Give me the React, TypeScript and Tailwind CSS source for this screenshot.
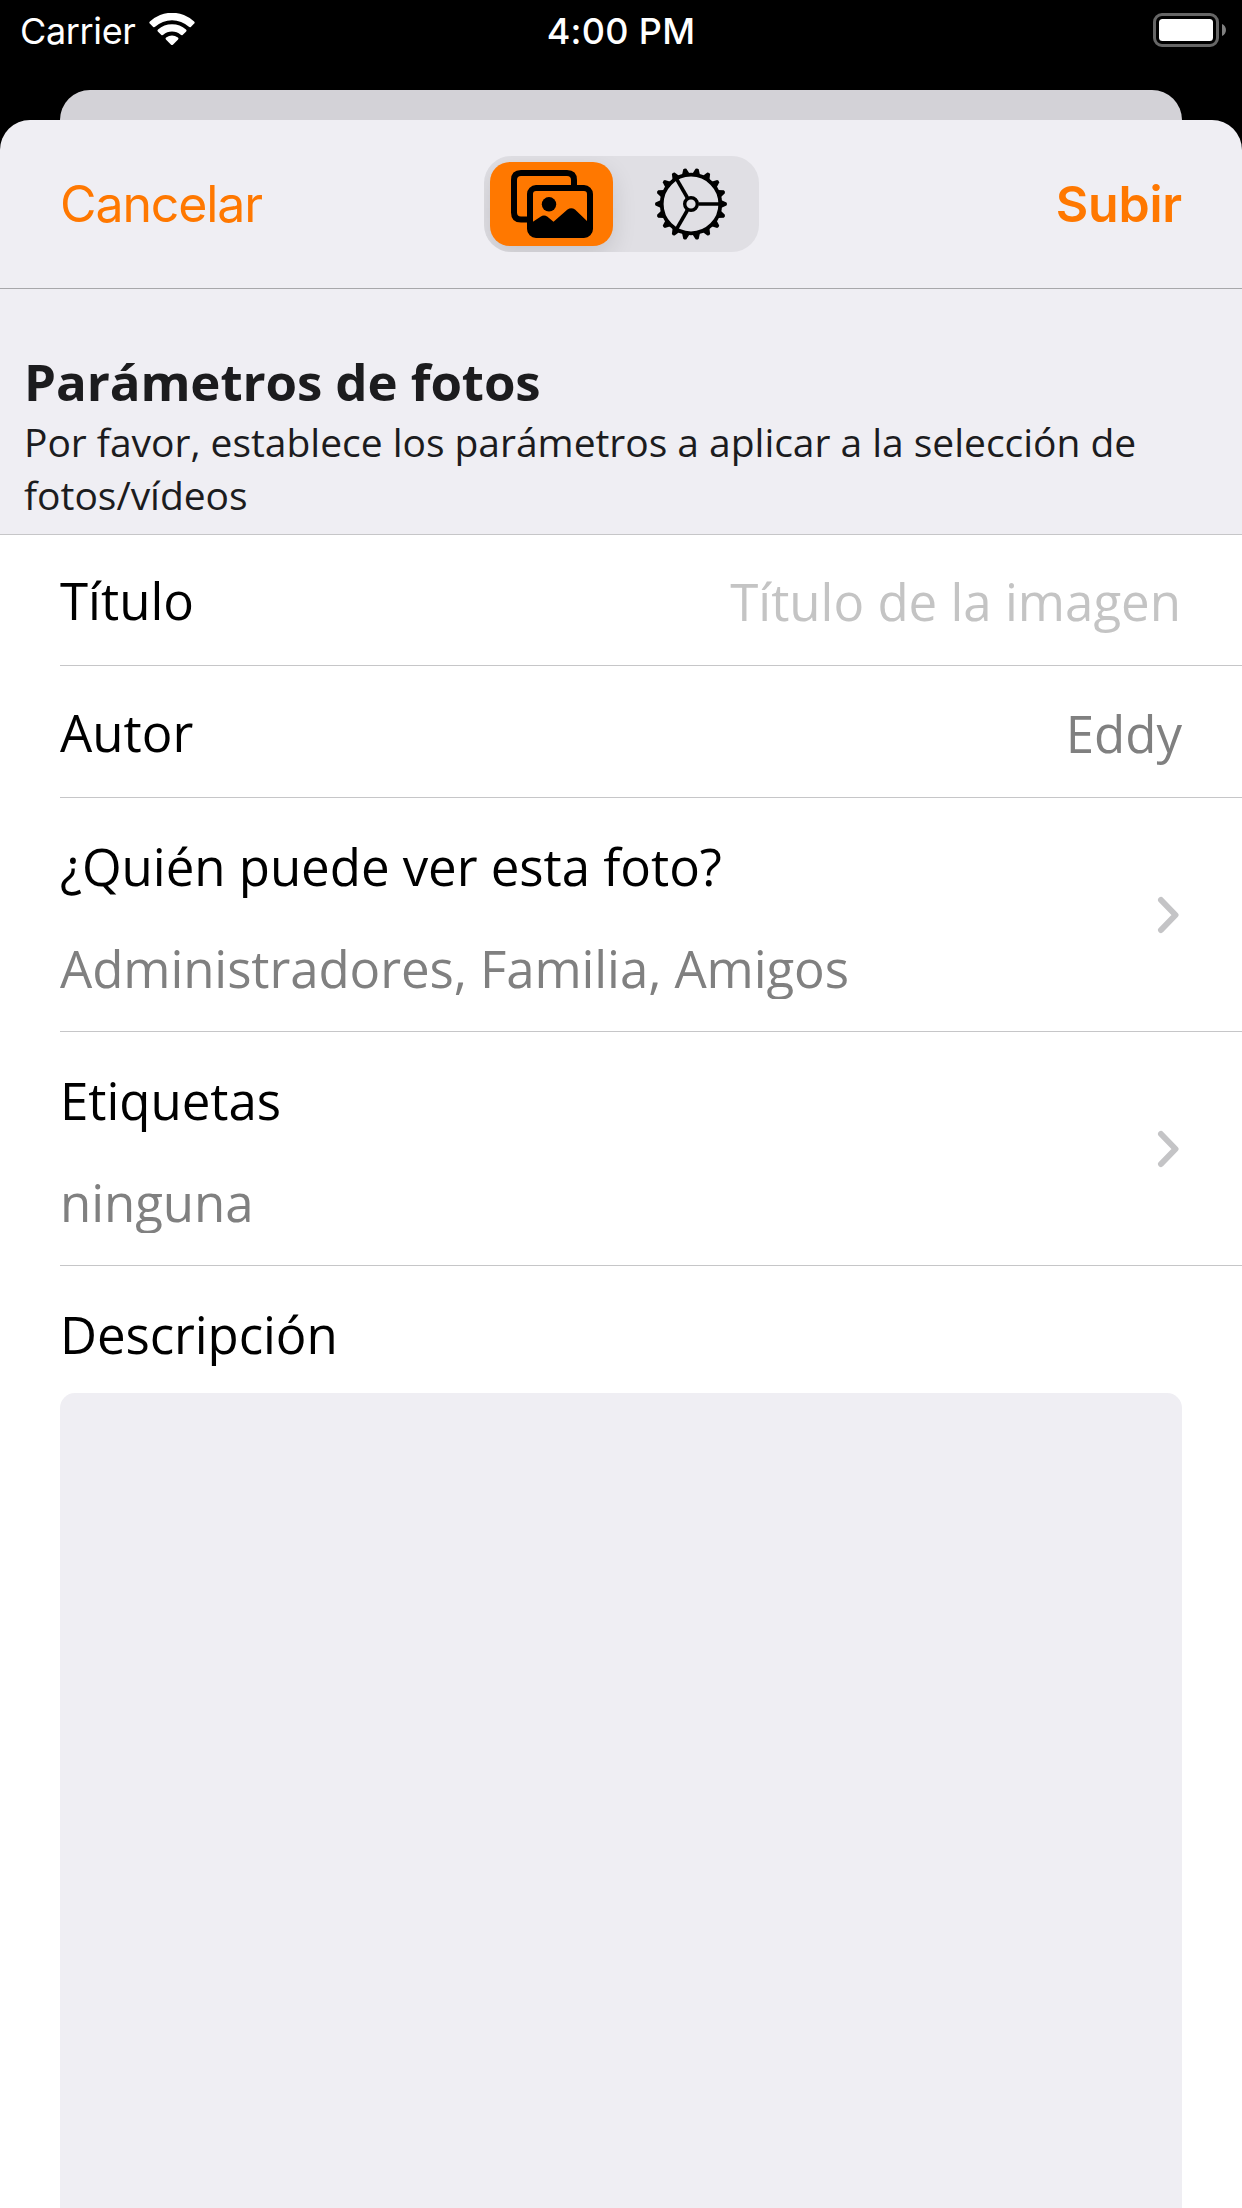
import React from "react";

const SANS = "font-['Open_Sans','Noto_Sans',sans-serif]";

function Wifi() {
  return (
    <svg width="46" height="34" viewBox="0 0 46 34" fill="#fff">
      <path d="M.8 10.6Q-.2 9.6.9 8.6A32 32 0 0 1 45.1 8.6Q46.2 9.6 45.2 10.6L41.8 13.9Q40.9 14.7 39.9 13.8A25 25 0 0 0 6.1 13.8Q5.1 14.7 4.2 13.9Z" />
      <path d="M8.8 18.4Q7.9 17.4 9 16.5A21 21 0 0 1 37 16.5Q38.1 17.4 37.2 18.4L33.6 21.9Q32.7 22.6 31.7 21.8A13.5 13.5 0 0 0 14.3 21.8Q13.3 22.6 12.4 21.9Z" />
      <path d="M16.9 26.4Q16 25.4 17.1 24.6A10 10 0 0 1 28.9 24.6Q30 25.4 29.1 26.4L23.9 31.7Q23 32.5 22.1 31.7Z" />
    </svg>
  );
}

function Battery() {
  return (
    <svg width="74" height="34" viewBox="0 0 74 34">
      <rect x="1.5" y="1.5" width="63" height="31" rx="7.5" fill="none" stroke="#666" strokeWidth="3" />
      <rect x="6" y="6" width="54" height="22" rx="3.5" fill="#fff" />
      <path d="M69 11C74.3 13 74.3 21 69 23Z" fill="#808080" />
    </svg>
  );
}

function Photos() {
  return (
    <svg width="82" height="68" viewBox="0 0 82 68">
      <path d="M63 18V10Q63 3 56 3H10Q3 3 3 10V42.500Q3 49.500 10 49.500H19" fill="none" stroke="#000" strokeWidth="6" />
      <rect x="19" y="18" width="60" height="47" rx="6" fill="none" stroke="#000" strokeWidth="6" />
      <circle cx="38" cy="34.300" r="7.2" />
      <path d="M20 53L29.500 46.700Q33 44.200 36.500 46.700L42.500 51.700L56.500 39.600Q60.200 37 64 39.600L77 52V62Q77 65 73 65H23Q19 65 19 62Z" />
    </svg>
  );
}

const TEETH = Array.from({ length: 18 }, (_, i) => i * 20);

function Gear() {
  return (
    <svg width="74" height="74" viewBox="-37 -37 74 74" stroke="#000">
      <circle r="29.300" fill="none" strokeWidth="3.800" />
      <circle r="6.300" fill="none" strokeWidth="3.400" />
      {[0, 120, 240].map((a) => (
        <path key={a} d="M7.500 0H29" strokeWidth="3.600" transform={`rotate(${a})`} />
      ))}
      {TEETH.map((a) => (
        <path key={a} d="M30 -3.900L35.500 -1.600Q36.600 0 35.500 1.600L30 3.900Z" stroke="none" transform={`rotate(${a})`} />
      ))}
    </svg>
  );
}

function Chevron() {
  return (
    <svg width="23" height="38" viewBox="0 0 23 38" className="mt-px mr-0.5 shrink-0">
      <path d="M4 4L18.500 19L4 34" fill="none" stroke="#c4c4c6" strokeWidth="6" strokeLinecap="round" strokeLinejoin="round" />
    </svg>
  );
}

function FieldRow({ label, value, tone }: { label: string; value: string; tone: string }) {
  return (
    <div className="ml-15 flex items-center justify-between border-b border-[#c6c6c8] pt-[3px] pr-15">
      <span className="pb-0.5">{label}</span>
      <span className={tone}>{value}</span>
    </div>
  );
}

function LinkRow({ label, value }: { label: string; value: string }) {
  return (
    <div className="ml-15 flex h-[234px] items-center justify-between border-b border-[#c6c6c8] pr-15">
      <div className="flex flex-col gap-8 self-start pt-[33px]">
        <span className="leading-[70px] tracking-[-0.04px]">{label}</span>
        <span className="h-[66px] overflow-hidden leading-[70px] text-[#808080]">{value}</span>
      </div>
      <Chevron />
    </div>
  );
}

export default function App() {
  return (
    <div className="flex h-[2208px] w-[1242px] flex-col overflow-hidden bg-black">
      <header className="grid h-[90px] shrink-0 grid-cols-3 items-start font-['Inter',sans-serif] text-white">
        <div className="flex items-start pt-[13px] pl-5">
          <span className="-mt-px w-[129px] text-[36px] leading-[38px] tracking-[-0.35px]">Carrier</span>
          <Wifi />
        </div>
        <div className="pt-3 text-center text-[36px] leading-[38px] font-medium tracking-[0.3px]">4:00 PM</div>
        <div className="flex justify-end pt-[13px] pr-[15px]">
          <Battery />
        </div>
      </header>
      <div className="mx-15 h-[30px] shrink-0 rounded-t-[30px] bg-[#d3d2d7]" />
      <main className="flex flex-1 flex-col rounded-t-[30px] bg-[#efeef3]">
        <nav className="grid h-[169px] shrink-0 grid-cols-[424px_275px_1fr] items-center border-b border-[#a7a7aa] px-15 font-['Inter',sans-serif] text-[50px] text-[#ff7800]">
          <span className="tracking-[-1.1px]">Cancelar</span>
          <div className="flex h-24 items-center overflow-hidden rounded-[27px] bg-[#e0dfe4] p-1.5">
            <div className="flex h-[84px] w-[123px] items-center justify-center rounded-[20px] bg-[#ff7800] pl-px shadow-[0_9px_24px_rgba(0,0,0,0.12)]">
              <Photos />
            </div>
            <div className="flex flex-1 justify-center pl-4">
              <Gear />
            </div>
          </div>
          <span className="text-right font-semibold tracking-[-0.2px]">Subir</span>
        </nav>
        <section className={`${SANS} h-[246px] shrink-0 border-b border-[#c6c6c8] px-6 pt-[58px] text-[#1c1c1e]`}>
          <h1 className="text-[51px] leading-[68px] font-bold tracking-[-0.1px]">Parámetros de fotos</h1>
          <p className="text-[39px] leading-[53px] tracking-[-0.03px]">
            Por favor, establece los parámetros a aplicar a la selección de fotos/vídeos
          </p>
        </section>
        <section className={`${SANS} flex flex-1 flex-col bg-white text-[51px] tracking-[-0.09px] text-black`}>
          <div className="grid grid-rows-[131px_132px] tracking-normal">
            <FieldRow label="Título" value="Título de la imagen" tone="pr-px text-[#c4c4c4]" />
            <FieldRow label="Autor" value="Eddy" tone="text-[#808080]" />
          </div>
          <LinkRow label="¿Quién puede ver esta foto?" value="Administradores, Familia, Amigos" />
          <LinkRow label="Etiquetas" value="ninguna" />
          <div className="flex flex-1 flex-col px-15 pt-[33px]">
            <span className="leading-[70px]">Descripción</span>
            <div className="mt-6 flex-1 rounded-t-[15px] bg-[#efeef3]" />
          </div>
        </section>
      </main>
    </div>
  );
}
